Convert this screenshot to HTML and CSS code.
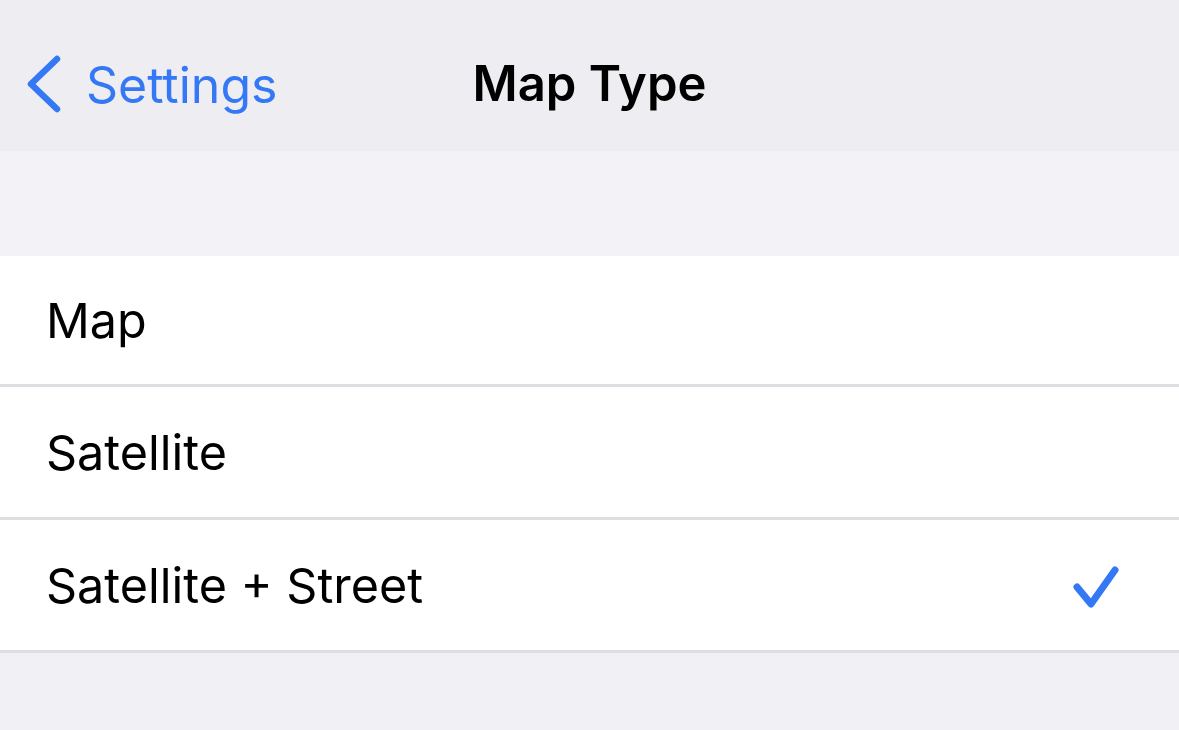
FILE: index.html
```html
<!DOCTYPE html>
<html lang="en">
<head>
  <meta charset="UTF-8" />
  <title>Map Type</title>
  <link rel="stylesheet" href="styles.css">
</head>
<body>
  <header class="nav-bar">
    <a class="back" href="#">
      <svg class="chevron" width="40" height="58" viewBox="0 0 40 58">
        <path d="M32 4 L6 29 L32 54" fill="none" stroke="#3478f6" stroke-width="6.5" stroke-linecap="round" stroke-linejoin="round"/>
      </svg>
      <span>Settings</span>
    </a>
    <h1 class="title">Map Type</h1>
  </header>

  <div class="spacer"></div>

  <ul class="list">
    <li class="row">Map</li>
    <li class="row">Satellite</li>
    <li class="row">
      <span>Satellite + Street</span>
      <svg class="check" width="52" height="50" viewBox="0 0 52 50">
        <path d="M6 23 L20 40 L44 6" fill="none" stroke="#3478f6" stroke-width="7" stroke-linecap="round" stroke-linejoin="round"/>
      </svg>
    </li>
  </ul>
</body>
</html>
```

FILE: styles.css
```css
body {
  margin: 0;
  background: #f0f0f5;
  font-family: Inter, "Noto Sans", sans-serif;
  color: #000;
}
.nav-bar {
  height: 151px;
  box-sizing: border-box;
  padding-top: 16px;
  background: #ededf2;
  display: flex;
  align-items: center;
  justify-content: center;
  position: relative;
}
.back {
  position: absolute;
  left: 25px;
  top: 16px;
  bottom: 0;
  display: flex;
  align-items: center;
  gap: 21px;
  color: #3478f6;
  text-decoration: none;
  font-size: 50px;
}
.back span {
  margin-top: 2px;
}
.title {
  margin: 0;
  font-size: 49px;
  font-weight: 600;
}
.spacer {
  height: 105px;
  background: #f2f2f7;
}
.list {
  list-style: none;
  margin: 0;
  padding: 0;
  background: #fff;
}
.row {
  height: 130px;
  border-bottom: 3px solid #dedee2;
  display: flex;
  align-items: center;
  justify-content: space-between;
  padding: 0 56px 0 46px;
  font-size: 48.5px;
}
.row:first-child {
  height: 128px;
}
.check {
  margin-top: 8px;
}
```
